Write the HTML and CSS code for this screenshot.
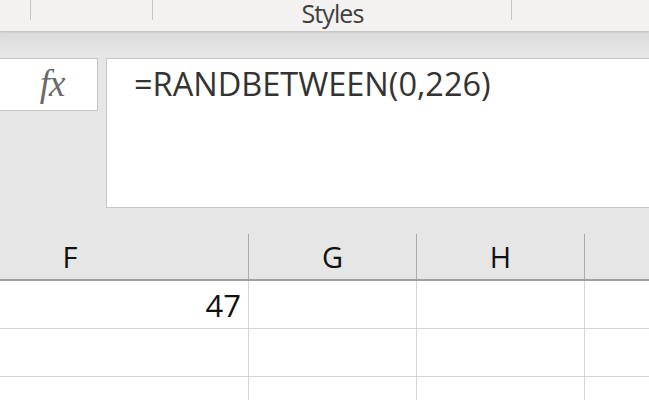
FILE: index.html
```html
<!DOCTYPE html>
<html lang="en">
<head>
  <meta charset="UTF-8" />
  <title>RANDBETWEEN</title>
  <link rel="stylesheet" href="styles.css">
</head>
<body>
  <div class="ribbon">
    <div class="group g1"></div>
    <div class="group g2"></div>
    <div class="group g3"><span class="group-label">Styles</span></div>
  </div>

  <div class="bar-area">
    <div class="namebox"><span class="fx">fx</span></div>
    <div class="formula">=RANDBETWEEN(0,226)</div>
  </div>

  <div class="sheet">
    <div class="row head">
      <div class="cell col-f">F</div>
      <div class="cell">G</div>
      <div class="cell">H</div>
      <div class="cell last"></div>
    </div>
    <div class="row">
      <div class="cell col-f num">47</div>
      <div class="cell"></div>
      <div class="cell"></div>
      <div class="cell last"></div>
    </div>
    <div class="row">
      <div class="cell col-f"></div>
      <div class="cell"></div>
      <div class="cell"></div>
      <div class="cell last"></div>
    </div>
    <div class="row">
      <div class="cell col-f"></div>
      <div class="cell"></div>
      <div class="cell"></div>
      <div class="cell last"></div>
    </div>
  </div>
</body>
</html>
```

FILE: styles.css
```css
html, body { overflow: hidden; }
body { margin: 0; background: #e6e6e6; font-family: "Open Sans", "Noto Sans", sans-serif; width: 649px; height: 400px; }

.ribbon { display: flex; height: 31px; background: #f3f2f1; box-shadow: 0 1px 2px rgba(0,0,0,0.12); position: relative; }
/* separator line only runs 20px down, so draw it as a background */
.group { height: 31px; background: linear-gradient(#c8c6c4, #c8c6c4) right top / 1px 20px no-repeat; }
.g1 { width: 31px; }
.g2 { width: 122px; }
.g3 { width: 359px; text-align: center; }
.group-label { display: block; padding-top: 1px; font-size: 25px; line-height: 24px; color: #3f3f3f; letter-spacing: -0.9px; }

.bar-area { display: flex; align-items: flex-start; padding-top: 27px; height: 150px; background: linear-gradient(#d9d9d9, #e6e6e6 22px); }
.namebox { width: 98px; height: 53px; box-sizing: border-box; background: #fff; border: 1px solid #c6c6c6; border-left: none; display: flex; justify-content: center; align-items: center; padding-left: 7px; }
.fx { font-family: "Liberation Serif", serif; font-style: italic; font-size: 37px; color: #6a6a6a; margin-top: -3px; letter-spacing: -1px; }
.formula { flex: 1; margin-left: 8px; height: 150px; box-sizing: border-box; background: #fff; border: 1px solid #c6c6c6; border-right: none; padding: 5px 0 0 27px; font-size: 32.5px; line-height: 40px; color: #333; }

.sheet { margin-top: 26px; height: 167px; overflow: hidden; }
.row { display: flex; height: 48px; background: #fff; border-bottom: 1px solid #d4d4d4; box-sizing: border-box; }
.row.head { height: 47px; background: #e6e6e6; border-bottom: 2px solid #9e9e9e; }
.cell { width: 168px; flex: none; box-sizing: border-box; border-right: 1px solid #d4d4d4; text-align: center; font-size: 29px; line-height: 46px; color: #111; }
.head .cell { border-right-color: #ababab; }
.cell.col-f { width: 249px; padding-right: 108px; }
.cell.num { text-align: right; padding-right: 7px; font-size: 31px; line-height: 48px; }
.cell.last { flex: 1; border-right: none; }
```
